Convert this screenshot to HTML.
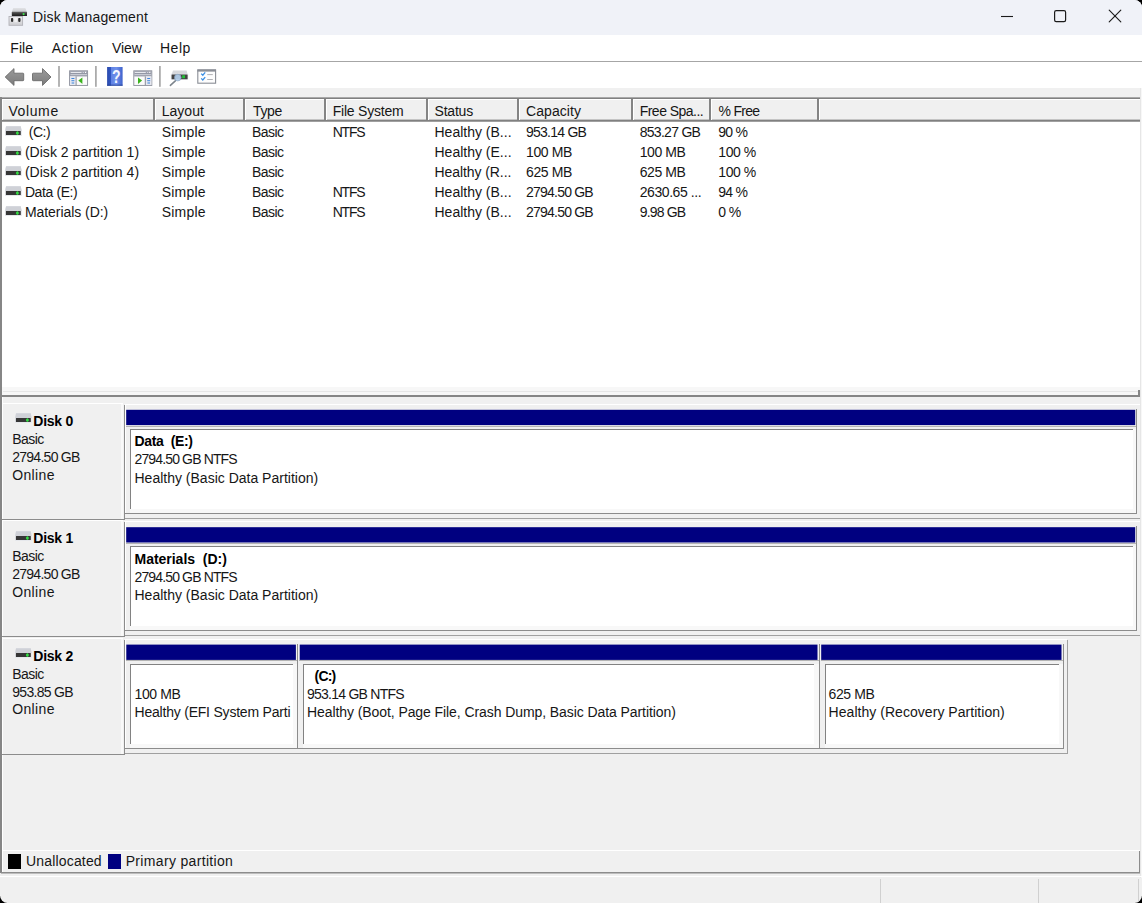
<!DOCTYPE html>
<html>
<head>
<meta charset="utf-8">
<title>Disk Management</title>
<style>
html,body{margin:0;padding:0;background:#000;}
body{width:1142px;height:903px;overflow:hidden;position:relative;font-family:"Liberation Sans",sans-serif;font-size:14.0px;color:#161616;}
#win{position:absolute;left:0;top:0;width:1142px;height:903px;background:#f0f0f0;border-radius:7.5px;overflow:hidden;}
.a{position:absolute;}
.t{position:absolute;white-space:pre;line-height:18px;height:18px;}
.b{font-weight:bold;color:#000;}
.navy{position:absolute;background:#000080;height:15px;}
.pb{position:absolute;background:#fff;border-left:1px solid #828282;border-top:1px solid #828282;box-sizing:border-box;}
.vd{position:absolute;width:1px;background:#8c8c8c;}
.hd{position:absolute;height:1px;background:#8c8c8c;}
.vw{position:absolute;width:1px;background:#fff;}
.hw{position:absolute;height:1px;background:#fff;}
.hs{position:absolute;top:99px;width:1px;height:21px;background:#848484;}
.hsw{position:absolute;top:100px;width:1px;height:20px;background:#fff;}
svg{position:absolute;overflow:visible;}
</style>
</head>
<body>
<div id="win">
  <!-- title bar -->
  <div class="a" style="left:0;top:0;width:1142px;height:35px;background:#f0f2f8;"></div>
  <svg style="left:0;top:0" width="40" height="35" viewBox="0 0 40 35">
    <defs>
      <linearGradient id="gbody" x1="0" y1="0" x2="0" y2="1"><stop offset="0" stop-color="#6a6a6a"/><stop offset="0.45" stop-color="#3a3a3a"/><stop offset="1" stop-color="#1e1e1e"/></linearGradient>
      <linearGradient id="gtop" x1="0" y1="0" x2="0" y2="1"><stop offset="0" stop-color="#e2e3e6"/><stop offset="1" stop-color="#c9cbcf"/></linearGradient>
      <linearGradient id="gbox" x1="0" y1="0" x2="0" y2="1"><stop offset="0" stop-color="#ededef"/><stop offset="1" stop-color="#cdcdd1"/></linearGradient>
    </defs>
    <path d="M13.2 8 H25.3 L27 12 H11.8 Z" fill="url(#gtop)"/>
    <rect x="11.8" y="11.8" width="15.2" height="4.3" rx="0.6" fill="url(#gbody)"/>
    <circle cx="23.6" cy="14.1" r="1.1" fill="#3fe04c"/>
    <rect x="9" y="16.5" width="13.6" height="8.8" fill="url(#gbox)" stroke="#b2b2b8" stroke-width="0.9"/>
    <rect x="11" y="18.1" width="2.2" height="3.8" rx="0.8" fill="#2e2e2e"/>
    <rect x="18.2" y="18.1" width="2.3" height="3.8" rx="0.8" fill="#2e2e2e"/>
    <rect x="14.3" y="17.6" width="2.8" height="4.6" fill="#f4f4f5" opacity="0.8"/>
  </svg>
  <svg style="left:990px;top:0" width="152" height="35" viewBox="990 0 152 35">
    <path d="M1001 16.5 H1013" stroke="#1b1b1b" stroke-width="1.1" fill="none"/>
    <rect x="1054.6" y="10.6" width="11" height="11" rx="1.6" fill="none" stroke="#1b1b1b" stroke-width="1.2"/>
    <path d="M1109.2 10.2 L1120.8 21.8 M1120.8 10.2 L1109.2 21.8" stroke="#1b1b1b" stroke-width="1.15" fill="none" stroke-linecap="round"/>
  </svg>

  <!-- menu bar -->
  <div class="a" style="left:0;top:35px;width:1142px;height:26px;background:#fff;"></div>
  <div class="a" style="left:0;top:61px;width:1142px;height:1px;background:#a6a6a6;"></div>
  <!-- toolbar -->
  <div class="a" style="left:0;top:62px;width:1142px;height:26px;background:#fff;"></div>
  <svg style="left:0;top:62px" width="230" height="28" viewBox="0 62 230 28">
    <defs>
      <linearGradient id="garr" x1="0" y1="0" x2="0" y2="1"><stop offset="0" stop-color="#9a9a9a"/><stop offset="1" stop-color="#7c7c7c"/></linearGradient>
      <linearGradient id="ghelp" x1="0" y1="0" x2="1" y2="0"><stop offset="0" stop-color="#2c4cae"/><stop offset="0.22" stop-color="#2f54c0"/><stop offset="0.26" stop-color="#5f82e4"/><stop offset="0.6" stop-color="#6f90ea"/><stop offset="1" stop-color="#3f62cc"/></linearGradient>
    </defs>
    <!-- back / forward -->
    <path d="M5.2 77 L14 68.6 V73.2 H23 Q23.7 73.2 23.7 73.9 V80 Q23.7 80.7 23 80.7 H14 V85.4 Z" fill="url(#garr)" stroke="#6c6c6c" stroke-width="0.9" stroke-linejoin="round"/>
    <path d="M51 77 L42.5 68.6 V73.2 H33.2 Q32.5 73.2 32.5 73.9 V80 Q32.5 80.7 33.2 80.7 H42.5 V85.4 Z" fill="url(#garr)" stroke="#6c6c6c" stroke-width="0.9" stroke-linejoin="round"/>
    <rect x="58.2" y="66" width="1.6" height="20.8" fill="#a2a2a2"/>
    <!-- show/hide tree -->
    <rect x="69.6" y="70.8" width="18" height="14.6" fill="#fbfbfb" stroke="#888c98" stroke-width="0.9"/>
    <rect x="70" y="71.2" width="17.2" height="5.2" fill="#9498a6"/>
    <rect x="70.6" y="72" width="11" height="0.9" fill="#f0f0f4"/>
    <rect x="82.6" y="72" width="1.6" height="0.9" fill="#d8d8e0"/><rect x="85" y="71.8" width="1.2" height="1.2" fill="#fff"/>
    <rect x="70.4" y="74.2" width="16.6" height="1" fill="#d4d6de"/>
    <rect x="70" y="76.4" width="5.6" height="8.6" fill="#e6e8f0"/>
    <rect x="75.6" y="76.4" width="1" height="8.8" fill="#888c98"/>
    <rect x="71.4" y="78" width="3" height="1" fill="#3f86dc"/><rect x="71.4" y="80.2" width="3" height="1" fill="#3f86dc"/><rect x="71.6" y="82" width="2.6" height="2" fill="#8fb6e6"/>
    <path d="M78.3 80.6 L82.4 77.4 V83.9 Z" fill="#39b31c"/>
    <rect x="95.1" y="66" width="1.6" height="20.8" fill="#a2a2a2"/>
    <!-- help -->
    <rect x="107.1" y="67" width="15.5" height="18.8" fill="url(#ghelp)"/>
    <rect x="107.1" y="84.6" width="15.5" height="1.2" fill="#27408e" opacity="0.7"/>
    <text transform="translate(116.2 83.2) scale(0.74 1)" x="0" y="0" font-family="Liberation Sans, sans-serif" font-weight="bold" font-size="19" fill="#f4f6ff" text-anchor="middle">?</text>
    <!-- second pane icon -->
    <rect x="133.8" y="70.8" width="18" height="14.6" fill="#fbfbfb" stroke="#888c98" stroke-width="0.9"/>
    <rect x="134.2" y="71.2" width="17.2" height="5.2" fill="#9498a6"/>
    <rect x="134.8" y="72" width="11" height="0.9" fill="#f0f0f4"/>
    <rect x="146.8" y="72" width="1.6" height="0.9" fill="#d8d8e0"/><rect x="149.2" y="71.8" width="1.2" height="1.2" fill="#fff"/>
    <rect x="134.6" y="74.2" width="16.6" height="1" fill="#d4d6de"/>
    <rect x="145.8" y="76.4" width="5.6" height="8.6" fill="#e6e8f0"/>
    <rect x="144.8" y="76.4" width="1" height="8.8" fill="#888c98"/>
    <rect x="147.2" y="78" width="3" height="1" fill="#3f86dc"/><rect x="147.2" y="80.2" width="3" height="1" fill="#3f86dc"/><rect x="147.4" y="82" width="2.6" height="2" fill="#8fb6e6"/>
    <path d="M142.1 80.6 L138 77.4 V83.9 Z" fill="#39b31c"/>
    <rect x="159.1" y="66" width="1.6" height="20.8" fill="#a2a2a2"/>
    <!-- disk + magnifier -->
    <path d="M173 70.6 H186.6 L187.6 74.4 H171.6 Z" fill="#d6d8dc"/>
    <rect x="170.8" y="73.8" width="17.4" height="6" fill="#e2e4ea"/><rect x="171.6" y="74.4" width="16" height="4.8" rx="0.5" fill="#444"/>
    <rect x="182.2" y="75.3" width="2.8" height="2.9" fill="#22c536"/>
    <path d="M175.6 80.6 L170.4 85.4" stroke="#7c848c" stroke-width="1.5" stroke-linecap="round"/>
    <circle cx="177.8" cy="77.6" r="3.3" fill="#b4d0ee" stroke="#8ea8c6" stroke-width="0.8" opacity="0.92"/>
    <!-- checklist -->
    <rect x="197.8" y="70" width="17.8" height="13.2" fill="#fdfdfd" stroke="#8a8e96" stroke-width="1.1"/>
    <rect x="197.4" y="69.4" width="18.6" height="2.2" fill="#8a8e96"/>
    <path d="M201.2 73.6 L202.8 75.2 L205.2 72.4" stroke="#3b8fe4" stroke-width="1.3" fill="none"/>
    <path d="M201.2 78.4 L202.8 80 L205.2 77.2" stroke="#3b8fe4" stroke-width="1.3" fill="none"/>
    <rect x="207.2" y="74.2" width="5.6" height="0.9" fill="#a8a8ac"/><rect x="207.2" y="79" width="5.6" height="0.9" fill="#a8a8ac"/>
  </svg>

  <!-- volume list -->
  <div class="a" style="left:0;top:97px;width:1140px;height:291px;background:#fff;"></div>
  <div class="a" style="left:2px;top:100px;width:1138px;height:20px;background:#f0f0f0;"></div>
  <div class="a" style="left:2px;top:119px;width:1138px;height:1px;background:#c4c4c4;"></div>
  <div class="a" style="left:2px;top:120px;width:1138px;height:1px;background:#808080;"></div>
  <div class="a" style="left:2px;top:121px;width:1138px;height:1px;background:#a0a0a0;"></div>
  <div class="a" style="left:0;top:97px;width:1140px;height:1px;background:#a8a8a8;"></div>
  <div class="a" style="left:0;top:98px;width:1140px;height:1px;background:#808080;"></div>
  <div class="a" style="left:0;top:97px;width:2px;height:299px;background:#868686;"></div>
  <div class="hsw" style="left:2px"></div><div class="hw" style="left:2px;top:99px;width:1138px"></div>
<div class="hs" style="left:153px;width:2px"></div><div class="hsw" style="left:155px"></div>
<div class="hs" style="left:243px;width:2px"></div><div class="hsw" style="left:245px"></div>
<div class="hs" style="left:324px;width:2px"></div><div class="hsw" style="left:326px"></div>
<div class="hs" style="left:426px;width:2px"></div><div class="hsw" style="left:428px"></div>
<div class="hs" style="left:517px;width:2px"></div><div class="hsw" style="left:519px"></div>
<div class="hs" style="left:631px;width:2px"></div><div class="hsw" style="left:633px"></div>
<div class="hs" style="left:709px;width:2px"></div><div class="hsw" style="left:711px"></div>
<div class="hs" style="left:817px;width:2px"></div><div class="hsw" style="left:819px"></div>
  <!-- splitter -->
  <div class="a" style="left:2px;top:387px;width:1138px;height:8px;background:#f7f7f7;"></div>
  <div class="a" style="left:3px;top:391px;width:1137px;height:1px;background:#e6e6e6;"></div>
  <div class="a" style="left:0;top:395px;width:1140px;height:2px;background:#868686;"></div>
  <div class="a" style="left:1138px;top:390px;width:2px;height:6px;background:#868686;"></div>
  <!-- lower pane left border -->
  <div class="a" style="left:0;top:396px;width:2px;height:477px;background:#868686;"></div>
  <div class="vw" style="left:2px;top:397px;height:475px;"></div>
  <div class="hw" style="left:2px;top:403px;width:121px"></div>
<div class="a" style="left:121px;top:404px;width:2px;height:115px;background:#f9f9f9"></div>
<div class="hd" style="left:2px;top:519px;width:123px"></div>
<div class="hw" style="left:125px;top:404px;width:1015px"></div>
<div class="hd" style="left:124px;top:518px;width:1016px;background:#a0a0a0"></div>
<div class="vd" style="left:124px;top:405px;height:114px"></div>
<div class="vw" style="left:125px;top:405px;height:108px"></div>
<div class="hd" style="left:125px;top:513px;width:1012px"></div>
<svg style="left:125px;top:408px" width="1012" height="20" viewBox="0 0 1012 20"><rect x="1.20" y="1.80" width="1009.00" height="15.3" fill="#000080"/></svg>
<div class="hd" style="left:126px;top:426px;width:1010px;background:#b4b4b4"></div>
<div class="vd" style="left:1136px;top:409px;height:105px"></div>
<div class="pb" style="left:130px;top:429px;width:1003px;height:80px"></div>
<div class="a" style="left:1133px;top:429px;width:3px;height:84px;background:#f8f8f8"></div>
<div class="a" style="left:130px;top:509px;width:1003px;height:4px;background:#f8f8f8"></div>
<div class="hw" style="left:2px;top:520px;width:121px"></div>
<div class="a" style="left:121px;top:521px;width:2px;height:115px;background:#f9f9f9"></div>
<div class="hd" style="left:2px;top:636px;width:123px"></div>
<div class="hw" style="left:125px;top:521px;width:1015px"></div>
<div class="hd" style="left:124px;top:635px;width:1016px;background:#a0a0a0"></div>
<div class="vd" style="left:124px;top:522px;height:114px"></div>
<div class="vw" style="left:125px;top:522px;height:108px"></div>
<div class="hd" style="left:125px;top:630px;width:1012px"></div>
<svg style="left:125px;top:525px" width="1012" height="20" viewBox="0 0 1012 20"><rect x="1.20" y="2.20" width="1009.00" height="15.3" fill="#000080"/></svg>
<div class="hd" style="left:126px;top:543px;width:1010px;background:#b4b4b4"></div>
<div class="vd" style="left:1136px;top:526px;height:105px"></div>
<div class="pb" style="left:130px;top:546px;width:1003px;height:80px"></div>
<div class="a" style="left:1133px;top:546px;width:3px;height:84px;background:#f8f8f8"></div>
<div class="a" style="left:130px;top:626px;width:1003px;height:4px;background:#f8f8f8"></div>
<div class="hw" style="left:2px;top:638px;width:121px"></div>
<div class="a" style="left:121px;top:639px;width:2px;height:115px;background:#f9f9f9"></div>
<div class="hd" style="left:2px;top:754px;width:123px"></div>
<div class="hw" style="left:125px;top:639px;width:942px"></div>
<div class="hd" style="left:124px;top:753px;width:944px;background:#a0a0a0"></div>
<div class="vd" style="left:1067px;top:640px;height:113px;background:#a0a0a0"></div>
<div class="vd" style="left:124px;top:640px;height:114px"></div>
<div class="vw" style="left:125px;top:640px;height:108px"></div>
<div class="hd" style="left:125px;top:748px;width:939px"></div>
<svg style="left:125px;top:643px" width="172" height="20" viewBox="0 0 172 20"><rect x="1.30" y="1.60" width="169.60" height="15.3" fill="#000080"/></svg>
<div class="hd" style="left:126px;top:660px;width:171px;background:#b4b4b4"></div>
<div class="vd" style="left:297px;top:644px;height:105px"></div>
<div class="pb" style="left:130px;top:664px;width:163px;height:80px"></div>
<div class="a" style="left:293px;top:664px;width:4px;height:84px;background:#f8f8f8"></div>
<div class="a" style="left:130px;top:744px;width:163px;height:4px;background:#f8f8f8"></div>
<svg style="left:298px;top:643px" width="521" height="20" viewBox="0 0 521 20"><rect x="1.70" y="1.60" width="517.80" height="15.3" fill="#000080"/></svg>
<div class="hd" style="left:299px;top:660px;width:520px;background:#b4b4b4"></div>
<div class="vd" style="left:819px;top:644px;height:105px"></div>
<div class="pb" style="left:303px;top:664px;width:511px;height:80px"></div>
<div class="a" style="left:814px;top:664px;width:5px;height:84px;background:#f8f8f8"></div>
<div class="a" style="left:303px;top:744px;width:511px;height:4px;background:#f8f8f8"></div>
<svg style="left:820px;top:643px" width="243" height="20" viewBox="0 0 243 20"><rect x="1.20" y="1.60" width="240.30" height="15.3" fill="#000080"/></svg>
<div class="hd" style="left:821px;top:660px;width:242px;background:#b4b4b4"></div>
<div class="vd" style="left:1063px;top:644px;height:105px"></div>
<div class="pb" style="left:825px;top:664px;width:234px;height:80px"></div>
<div class="a" style="left:1059px;top:664px;width:4px;height:84px;background:#f8f8f8"></div>
<div class="a" style="left:825px;top:744px;width:234px;height:4px;background:#f8f8f8"></div>
  <div class="a" style="left:1140px;top:88px;width:1px;height:790px;background:#e6e6e6;"></div>
  <div class="a" style="left:1141px;top:88px;width:1px;height:790px;background:#f7f7f7;"></div>
  <!-- legend -->
  <div class="hw" style="left:2px;top:850px;width:1138px;"></div>
  <div class="hd" style="left:1px;top:872px;width:1139px;background:#8c8c8c;"></div>
  <div class="hd" style="left:1px;top:873px;width:1139px;background:#bcbcbc;"></div>
  <div class="vd" style="left:1139px;top:851px;height:22px;"></div>
  <div class="a" style="left:8px;top:854px;width:12.5px;height:15px;background:#000;"></div>
  <div class="a" style="left:108px;top:854px;width:12.5px;height:15px;background:#000080;"></div>
  <!-- status bar -->
  <div class="hw" style="left:0;top:876px;width:1142px;"></div>
  <div class="vd" style="left:880px;top:879px;height:24px;background:#d0d0d0;"></div>
  <div class="vd" style="left:1038px;top:879px;height:24px;background:#d0d0d0;"></div>
  <div class="vd" style="left:1138px;top:879px;height:24px;background:#d0d0d0;"></div>
<svg style="left:5.1px;top:125.7px" width="18" height="12" viewBox="0 0 18 12"><path d="M1 0.2 H15.8 L16.8 4.8 V10 H0 V4.8 Z" fill="#e6e8ec"/><path d="M1 0.2 H15.8 L16.6 5 H0.2 Z" fill="#cfd1d7"/><rect x="0.9" y="4.9" width="14.9" height="4.2" rx="0.4" fill="#363636"/><circle cx="12.4" cy="7" r="1.5" fill="#35d845"/><rect x="11.9" y="5.2" width="1" height="3.8" fill="#35d845" opacity="0.7"/></svg>
<svg style="left:5.1px;top:145.7px" width="18" height="12" viewBox="0 0 18 12"><path d="M1 0.2 H15.8 L16.8 4.8 V10 H0 V4.8 Z" fill="#e6e8ec"/><path d="M1 0.2 H15.8 L16.6 5 H0.2 Z" fill="#cfd1d7"/><rect x="0.9" y="4.9" width="14.9" height="4.2" rx="0.4" fill="#363636"/><circle cx="12.4" cy="7" r="1.5" fill="#35d845"/><rect x="11.9" y="5.2" width="1" height="3.8" fill="#35d845" opacity="0.7"/></svg>
<svg style="left:5.1px;top:165.7px" width="18" height="12" viewBox="0 0 18 12"><path d="M1 0.2 H15.8 L16.8 4.8 V10 H0 V4.8 Z" fill="#e6e8ec"/><path d="M1 0.2 H15.8 L16.6 5 H0.2 Z" fill="#cfd1d7"/><rect x="0.9" y="4.9" width="14.9" height="4.2" rx="0.4" fill="#363636"/><circle cx="12.4" cy="7" r="1.5" fill="#35d845"/><rect x="11.9" y="5.2" width="1" height="3.8" fill="#35d845" opacity="0.7"/></svg>
<svg style="left:5.1px;top:185.7px" width="18" height="12" viewBox="0 0 18 12"><path d="M1 0.2 H15.8 L16.8 4.8 V10 H0 V4.8 Z" fill="#e6e8ec"/><path d="M1 0.2 H15.8 L16.6 5 H0.2 Z" fill="#cfd1d7"/><rect x="0.9" y="4.9" width="14.9" height="4.2" rx="0.4" fill="#363636"/><circle cx="12.4" cy="7" r="1.5" fill="#35d845"/><rect x="11.9" y="5.2" width="1" height="3.8" fill="#35d845" opacity="0.7"/></svg>
<svg style="left:5.1px;top:205.7px" width="18" height="12" viewBox="0 0 18 12"><path d="M1 0.2 H15.8 L16.8 4.8 V10 H0 V4.8 Z" fill="#e6e8ec"/><path d="M1 0.2 H15.8 L16.6 5 H0.2 Z" fill="#cfd1d7"/><rect x="0.9" y="4.9" width="14.9" height="4.2" rx="0.4" fill="#363636"/><circle cx="12.4" cy="7" r="1.5" fill="#35d845"/><rect x="11.9" y="5.2" width="1" height="3.8" fill="#35d845" opacity="0.7"/></svg>
<svg style="left:14.6px;top:413.3px" width="18" height="12" viewBox="0 0 18 12"><path d="M1 0.2 H15.8 L16.8 4.8 V10 H0 V4.8 Z" fill="#e6e8ec"/><path d="M1 0.2 H15.8 L16.6 5 H0.2 Z" fill="#cfd1d7"/><rect x="0.9" y="4.9" width="14.9" height="4.2" rx="0.4" fill="#363636"/><circle cx="12.4" cy="7" r="1.5" fill="#35d845"/><rect x="11.9" y="5.2" width="1" height="3.8" fill="#35d845" opacity="0.7"/></svg>
<svg style="left:14.6px;top:530.7px" width="18" height="12" viewBox="0 0 18 12"><path d="M1 0.2 H15.8 L16.8 4.8 V10 H0 V4.8 Z" fill="#e6e8ec"/><path d="M1 0.2 H15.8 L16.6 5 H0.2 Z" fill="#cfd1d7"/><rect x="0.9" y="4.9" width="14.9" height="4.2" rx="0.4" fill="#363636"/><circle cx="12.4" cy="7" r="1.5" fill="#35d845"/><rect x="11.9" y="5.2" width="1" height="3.8" fill="#35d845" opacity="0.7"/></svg>
<svg style="left:14.6px;top:648.1px" width="18" height="12" viewBox="0 0 18 12"><path d="M1 0.2 H15.8 L16.8 4.8 V10 H0 V4.8 Z" fill="#e6e8ec"/><path d="M1 0.2 H15.8 L16.6 5 H0.2 Z" fill="#cfd1d7"/><rect x="0.9" y="4.9" width="14.9" height="4.2" rx="0.4" fill="#363636"/><circle cx="12.4" cy="7" r="1.5" fill="#35d845"/><rect x="11.9" y="5.2" width="1" height="3.8" fill="#35d845" opacity="0.7"/></svg>
<div class="t" style="left:33.0px;top:7.7px;letter-spacing:0.14px;">Disk Management</div>
<div class="t" style="left:10.3px;top:38.5px;letter-spacing:0.07px;">File</div>
<div class="t" style="left:51.7px;top:38.5px;letter-spacing:0.56px;">Action</div>
<div class="t" style="left:112.0px;top:38.5px;letter-spacing:-0.10px;">View</div>
<div class="t" style="left:160.0px;top:38.5px;letter-spacing:0.50px;">Help</div>
<div class="t" style="left:8.4px;top:101.8px;letter-spacing:0.62px;">Volume</div>
<div class="t" style="left:161.8px;top:101.8px;">Layout</div>
<div class="t" style="left:253.0px;top:101.8px;letter-spacing:-0.33px;">Type</div>
<div class="t" style="left:332.7px;top:101.8px;letter-spacing:-0.22px;">File System</div>
<div class="t" style="left:434.5px;top:101.8px;letter-spacing:-0.20px;">Status</div>
<div class="t" style="left:526.0px;top:101.8px;letter-spacing:0.07px;">Capacity</div>
<div class="t" style="left:639.7px;top:101.8px;letter-spacing:-0.52px;">Free Spa...</div>
<div class="t" style="left:718.5px;top:101.8px;letter-spacing:-0.70px;">% Free</div>
<div class="t" style="left:28.7px;top:122.7px;letter-spacing:-0.43px;">(C:)</div>
<div class="t" style="left:24.9px;top:142.7px;letter-spacing:0.03px;">(Disk 2 partition 1)</div>
<div class="t" style="left:24.9px;top:162.7px;letter-spacing:0.03px;">(Disk 2 partition 4)</div>
<div class="t" style="left:24.9px;top:182.7px;letter-spacing:-0.39px;">Data (E:)</div>
<div class="t" style="left:24.9px;top:202.7px;letter-spacing:-0.05px;">Materials (D:)</div>
<div class="t" style="left:161.8px;top:122.7px;letter-spacing:0.18px;">Simple</div>
<div class="t" style="left:252.0px;top:122.7px;letter-spacing:-0.58px;">Basic</div>
<div class="t" style="left:161.8px;top:142.7px;letter-spacing:0.18px;">Simple</div>
<div class="t" style="left:252.0px;top:142.7px;letter-spacing:-0.58px;">Basic</div>
<div class="t" style="left:161.8px;top:162.7px;letter-spacing:0.18px;">Simple</div>
<div class="t" style="left:252.0px;top:162.7px;letter-spacing:-0.58px;">Basic</div>
<div class="t" style="left:161.8px;top:182.7px;letter-spacing:0.18px;">Simple</div>
<div class="t" style="left:252.0px;top:182.7px;letter-spacing:-0.58px;">Basic</div>
<div class="t" style="left:161.8px;top:202.7px;letter-spacing:0.18px;">Simple</div>
<div class="t" style="left:252.0px;top:202.7px;letter-spacing:-0.58px;">Basic</div>
<div class="t" style="left:332.7px;top:122.7px;letter-spacing:-1.20px;">NTFS</div>
<div class="t" style="left:332.7px;top:182.7px;letter-spacing:-1.20px;">NTFS</div>
<div class="t" style="left:332.7px;top:202.7px;letter-spacing:-1.20px;">NTFS</div>
<div class="t" style="left:434.5px;top:122.7px;">Healthy (B...</div>
<div class="t" style="left:434.5px;top:142.7px;">Healthy (E...</div>
<div class="t" style="left:434.5px;top:162.7px;letter-spacing:-0.08px;">Healthy (R...</div>
<div class="t" style="left:434.5px;top:182.7px;">Healthy (B...</div>
<div class="t" style="left:434.5px;top:202.7px;">Healthy (B...</div>
<div class="t" style="left:526.0px;top:122.7px;letter-spacing:-0.75px;">953.14 GB</div>
<div class="t" style="left:526.0px;top:142.7px;letter-spacing:-0.40px;">100 MB</div>
<div class="t" style="left:526.0px;top:162.7px;letter-spacing:-0.40px;">625 MB</div>
<div class="t" style="left:526.0px;top:182.7px;letter-spacing:-0.78px;">2794.50 GB</div>
<div class="t" style="left:526.0px;top:202.7px;letter-spacing:-0.78px;">2794.50 GB</div>
<div class="t" style="left:639.7px;top:122.7px;letter-spacing:-0.71px;">853.27 GB</div>
<div class="t" style="left:639.7px;top:142.7px;letter-spacing:-0.40px;">100 MB</div>
<div class="t" style="left:639.7px;top:162.7px;letter-spacing:-0.40px;">625 MB</div>
<div class="t" style="left:639.7px;top:182.7px;letter-spacing:-0.42px;">2630.65 ...</div>
<div class="t" style="left:639.7px;top:202.7px;letter-spacing:-0.83px;">9.98 GB</div>
<div class="t" style="left:718.3px;top:122.7px;letter-spacing:-0.77px;">90 %</div>
<div class="t" style="left:718.3px;top:142.7px;letter-spacing:-0.45px;">100 %</div>
<div class="t" style="left:718.3px;top:162.7px;letter-spacing:-0.45px;">100 %</div>
<div class="t" style="left:718.3px;top:182.7px;letter-spacing:-0.77px;">94 %</div>
<div class="t" style="left:718.3px;top:202.7px;letter-spacing:-0.65px;">0 %</div>
<div class="t b" style="left:33.3px;top:411.9px;letter-spacing:-0.26px;">Disk 0</div>
<div class="t" style="left:12.2px;top:430.0px;letter-spacing:-0.55px;">Basic</div>
<div class="t" style="left:12.2px;top:447.8px;letter-spacing:-0.73px;">2794.50 GB</div>
<div class="t" style="left:12.2px;top:465.5px;letter-spacing:0.36px;">Online</div>
<div class="t b" style="left:33.3px;top:529.3px;letter-spacing:-0.26px;">Disk 1</div>
<div class="t" style="left:12.2px;top:547.4px;letter-spacing:-0.55px;">Basic</div>
<div class="t" style="left:12.2px;top:565.2px;letter-spacing:-0.73px;">2794.50 GB</div>
<div class="t" style="left:12.2px;top:582.9px;letter-spacing:0.36px;">Online</div>
<div class="t b" style="left:33.3px;top:646.7px;letter-spacing:-0.26px;">Disk 2</div>
<div class="t" style="left:12.2px;top:664.8px;letter-spacing:-0.55px;">Basic</div>
<div class="t" style="left:12.2px;top:682.6px;letter-spacing:-0.69px;">953.85 GB</div>
<div class="t" style="left:12.2px;top:700.3px;letter-spacing:0.36px;">Online</div>
<div class="t b" style="left:134.5px;top:432.2px;letter-spacing:-0.33px;">Data  (E:)</div>
<div class="t" style="left:134.5px;top:450.2px;letter-spacing:-0.86px;">2794.50 GB NTFS</div>
<div class="t" style="left:134.5px;top:468.5px;">Healthy (Basic Data Partition)</div>
<div class="t b" style="left:134.5px;top:549.6px;letter-spacing:-0.02px;">Materials  (D:)</div>
<div class="t" style="left:134.5px;top:567.6px;letter-spacing:-0.86px;">2794.50 GB NTFS</div>
<div class="t" style="left:134.5px;top:585.9px;">Healthy (Basic Data Partition)</div>
<div class="t" style="left:134.5px;top:684.8px;letter-spacing:-0.40px;">100 MB</div>
<div class="t" style="left:134.5px;top:703.0px;letter-spacing:-0.21px;">Healthy (EFI System Parti</div>
<div class="t b" style="left:314.5px;top:666.8px;letter-spacing:-0.77px;">(C:)</div>
<div class="t" style="left:307.0px;top:684.8px;letter-spacing:-0.75px;">953.14 GB NTFS</div>
<div class="t" style="left:307.0px;top:703.0px;letter-spacing:-0.08px;">Healthy (Boot, Page File, Crash Dump, Basic Data Partition)</div>
<div class="t" style="left:828.6px;top:684.8px;letter-spacing:-0.40px;">625 MB</div>
<div class="t" style="left:828.6px;top:703.0px;letter-spacing:0.04px;">Healthy (Recovery Partition)</div>
<div class="t" style="left:26.0px;top:852.2px;letter-spacing:0.17px;">Unallocated</div>
<div class="t" style="left:125.7px;top:852.2px;letter-spacing:0.33px;">Primary partition</div>
</div>
</body>
</html>
